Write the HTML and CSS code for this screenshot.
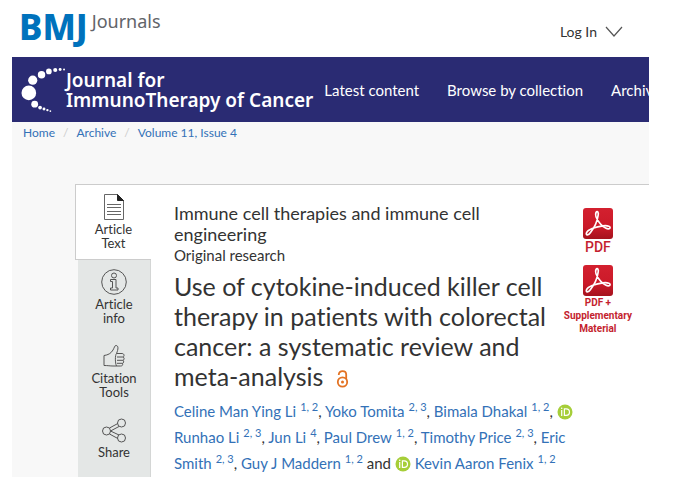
FILE: index.html
```html
<!DOCTYPE html>
<html lang="en">
<head>
    <meta charset="UTF-8">
    <meta name="viewport" content="width=device-width, initial-scale=1.0">
    <title>Journal for ImmunoTherapy of Cancer</title>
    <link rel="stylesheet" href="styles.css">
</head>
<body>
    <!-- Shared icons -->
    <svg class="sprite" aria-hidden="true">
        <defs>
            <linearGradient id="red" x1="0" y1="0" x2="0" y2="1">
                <stop offset="0" stop-color="#d3202f"/>
                <stop offset="0.6" stop-color="#cb1a29"/>
                <stop offset="1" stop-color="#a5121d"/>
            </linearGradient>
        </defs>
        <symbol id="pdf" viewBox="0 0 30 31">
            <rect width="30" height="31" rx="3" fill="url(#red)"/>
            <path d="M13 4.500C14.500 2.500 16 4.500 15 8C14.300 13 11 20 7.500 24.500C5.500 27.500 2.500 27.500 3.500 24.800C5 21.500 13 18.500 20 17.800C25 17.300 28 18.500 26.800 20.300C25 22 20.500 19.500 17.500 16C14.500 12.500 11.500 7.500 13 4.500Z" fill="none" stroke="#fff" stroke-width="1.700" stroke-linejoin="round"/>
        </symbol>
        <symbol id="orcid" viewBox="0 0 16 16">
            <circle cx="8" cy="8" r="7.500" fill="#a6ce39"/>
            <circle cx="4.700" cy="4.200" r="0.800" fill="#fff"/>
            <path d="M4.700 6V12M7.400 4.800V11.400H9.200C11.400 11.400 12.500 9.900 12.500 8.100S11.400 4.800 9.200 4.800Z" fill="none" stroke="#fff" stroke-width="1.200"/>
        </symbol>
    </svg>

    <div class="page">
        <header class="top-bar">
            <a class="bmj" href="#"><strong>BMJ</strong> <span>Journals</span></a>
            <button class="login" type="button">Log In
                <svg width="18" height="11" viewBox="0 0 18 11" aria-hidden="true"><path d="M1 1L9 10L17 1" fill="none" stroke="#555" stroke-width="1.200"/></svg>
            </button>
        </header>

        <nav class="main-nav">
            <a class="brand" href="#">
                <svg width="45" height="48" viewBox="0 0 46 48" fill="#fff" aria-hidden="true">
                    <circle cx="8" cy="27" r="7.500"/>
                    <circle cx="12" cy="14" r="4.700"/>
                    <circle cx="21" cy="8.500" r="3.800"/>
                    <circle cx="28.500" cy="5" r="2.900"/>
                    <circle cx="35" cy="3.500" r="2.100"/>
                    <circle cx="40" cy="3" r="1.500"/>
                    <circle cx="44" cy="3" r="1"/>
                    <circle cx="14" cy="38.500" r="3.500"/>
                    <circle cx="19.500" cy="42" r="1.900"/>
                    <circle cx="23.500" cy="43.500" r="1.500"/>
                    <circle cx="27" cy="44.500" r="1.200"/>
                    <circle cx="30" cy="45.500" r="0.900"/>
                </svg>
                <span>Journal for<br>ImmunoTherapy of Cancer</span>
            </a>
            <a href="#">Latest content</a>
            <a href="#">Browse by collection</a>
            <a href="#">Archive</a>
        </nav>

        <nav class="breadcrumb">
            <a href="#">Home</a><i>/</i><a href="#">Archive</a><i>/</i><a href="#">Volume 11, Issue 4</a>
        </nav>

        <div class="layout">
            <nav class="tabs">
                <a class="active" href="#">
                    <svg width="26" height="28" viewBox="0 0 26 28" fill="none" stroke="#666" aria-hidden="true">
                        <path d="M3.500 1.500H16.500L22.500 7.500V26.500H3.500Z"/>
                        <path d="M16.500 1.500V7.500H22.500Z" fill="#222" stroke="#222"/>
                        <path d="M6 11.500H20M6 14.500H20M6 18.500H20M6 21.500H20"/>
                    </svg>
                    Article<br>Text
                </a>
                <a href="#">
                    <svg width="26" height="28" viewBox="0 0 26 28" fill="none" stroke="#555" aria-hidden="true">
                        <circle cx="13" cy="14" r="12.300"/>
                        <circle cx="13" cy="7.500" r="2.500"/>
                        <path d="M9.500 11.500H15V20H17V22H9.500V20H11.500V13.500H9.500Z"/>
                    </svg>
                    Article<br>info
                </a>
                <a href="#">
                    <svg width="26" height="28" viewBox="0 0 26 28" fill="none" stroke="#555" aria-hidden="true">
                        <path d="M3 13.500C7 13 10 11.500 12 8C13.500 5.500 13.500 3.500 15 3.500C17.500 3.500 17.500 7 15.500 11.500H21C23.500 11.500 23.500 14.500 22 15C23.500 15.500 23.500 18 22 18.300C23 19 23 21 21.500 21.300C22 23 21.500 24 19.500 24H12C9 24 7 23.500 3 23.500Z"/>
                        <path d="M16 15H22M16 18.300H22M16 21.300H21.500M15.500 11.500C14 13 14 21 15.500 24"/>
                    </svg>
                    Citation<br>Tools
                </a>
                <a href="#">
                    <svg width="26" height="28" viewBox="0 0 26 28" fill="none" stroke="#555" aria-hidden="true">
                        <path d="M8.500 12L16.800 7.500M8.500 18L16.800 22.500M9.500 15L18 10.500M9.500 15L18 19"/>
                        <circle cx="5.500" cy="15" r="4"/>
                        <circle cx="20.500" cy="7" r="4"/>
                        <circle cx="20.500" cy="22" r="4"/>
                    </svg>
                    Share
                </a>
            </nav>

            <main class="article">
                <div class="article-head">
                    <div class="headings">
                        <p class="section">Immune cell therapies and immune cell engineering</p>
                        <p class="type">Original research</p>
                        <h1>Use of cytokine-induced killer cell therapy in patients with colorectal cancer: a systematic review and meta-analysis
                            <svg class="open-access" width="13" height="18" viewBox="0 0 13 18" fill="none" stroke="#e37222" stroke-width="1.800" role="img" aria-label="Open access">
                                <circle cx="6.500" cy="12" r="4.700"/>
                                <path d="M2.800 5V4.500C2.800 0 10.200 0 10.200 4.500V9"/>
                                <circle cx="6.500" cy="12" r="1.500" fill="#e37222" stroke="none"/>
                            </svg>
                        </h1>
                    </div>
                    <div class="downloads">
                        <a class="pdf" href="#"><svg width="30" height="31"><use href="#pdf"/></svg>PDF</a>
                        <a href="#"><svg width="30" height="31"><use href="#pdf"/></svg>PDF +<br>Supplementary<br>Material</a>
                    </div>
                </div>

                <p class="authors">
                    <a href="#">Celine Man Ying Li</a><sup>1, 2</sup>, <a href="#">Yoko Tomita</a><sup>2, 3</sup>, <a href="#">Bimala Dhakal</a><sup>1, 2</sup>, <svg width="16" height="16"><use href="#orcid"/></svg>
                    <a href="#">Runhao Li</a><sup>2, 3</sup>, <a href="#">Jun Li</a><sup>4</sup>, <a href="#">Paul Drew</a><sup>1, 2</sup>, <a href="#">Timothy Price</a><sup>2, 3</sup>, <a href="#">Eric Smith</a><sup>2, 3</sup>, <a href="#">Guy J Maddern</a><sup>1, 2</sup> and <svg width="16" height="16"><use href="#orcid"/></svg> <a href="#">Kevin Aaron Fenix</a><sup>1, 2</sup>
                </p>
            </main>
        </div>
    </div>
</body>
</html>
```

FILE: styles.css
```css
* {
    box-sizing: border-box;
}
body {
    font-family: Lato, "Open Sans", sans-serif;
    font-variant-ligatures: none;
    margin: 0;
    background: #fff;
    color: #333;
}
a {
    color: #3371b7;
    text-decoration: none;
}
p, h1 {
    margin: 0;
    font-weight: 400;
}
.sprite {
    position: absolute;
    width: 0;
    height: 0;
}
.page {
    margin: 0 40px 0 12px;
    background: #f8f8f8;
}

/* Header */
.top-bar {
    display: flex;
    justify-content: space-between;
    height: 57px;
    padding: 0 26px 0 7px;
    background: #fff;
}
.bmj {
    display: flex;
    align-items: flex-start;
    gap: 4px;
    font-family: "Noto Sans", sans-serif;
    color: #626469;
}
.bmj strong {
    font-size: 35px;
    font-weight: 800;
    line-height: 54px;
    color: #0072bc;
}
.bmj span {
    font-size: 18px;
    line-height: 42px;
}
.login {
    display: flex;
    align-items: center;
    gap: 8px;
    padding: 5px 0 0;
    border: 0;
    background: none;
    font: inherit;
    font-size: 14px;
    color: #333;
}
.main-nav {
    display: flex;
    align-items: center;
    gap: 28px;
    height: 65px;
    padding-left: 9px;
    background: #2a2b73;
    font-size: 15px;
    white-space: nowrap;
    overflow: hidden;
}
.main-nav a {
    color: #fff;
}
.main-nav .brand {
    display: flex;
    align-items: center;
    margin-right: -17px;
    font-family: "Noto Sans", sans-serif;
    font-size: 19px;
    font-weight: 600;
    line-height: 20px;
}
.breadcrumb {
    padding: 2px 11px 0;
    font-size: 12px;
    line-height: 18px;
}
.breadcrumb i {
    margin: 0 8px;
    font-style: normal;
    color: #ccc;
}

/* Article */
.layout {
    display: flex;
    margin-top: 42px;
    padding-left: 63px;
}
.tabs {
    flex: 0 0 76px;
    border-right: 1px solid #d4d6d5;
    background: linear-gradient(to right, #f8f8f8 3px, #e4e7e6 3px);
}
.tabs a {
    display: flex;
    flex-direction: column;
    align-items: center;
    padding: 8px 0 9px 3px;
    font-size: 13px;
    line-height: 14px;
    text-align: center;
    color: #333;
}
.tabs svg {
    margin-bottom: 1px;
}
.tabs .active {
    margin-right: -1px;
    padding: 8px 0 9px;
    border: 1px solid #ccc;
    border-right: 0;
    background: #fff;
}
.article {
    flex: 1;
    padding: 18px 17px 1px 23px;
    border-top: 1px solid #ccc;
    background: #fff;
}
.article-head {
    display: flex;
    justify-content: space-between;
    gap: 8px;
}
.headings {
    flex: 1;
}
.section {
    font-size: 18px;
    line-height: 21px;
}
.type {
    font-size: 15px;
    line-height: 21px;
}
h1 {
    margin-top: 5px;
    font-size: 25px;
    line-height: 30px;
}
.open-access {
    margin-left: 6px;
    vertical-align: -2px;
}
.downloads {
    display: flex;
    flex-direction: column;
    gap: 9px;
    padding-top: 5px;
}
.downloads a {
    display: flex;
    flex-direction: column;
    align-items: center;
    font-family: Roboto, sans-serif;
    font-size: 10px;
    font-weight: 700;
    line-height: 13px;
    text-align: center;
    color: #c41f2f;
}
.downloads .pdf {
    font-size: 14px;
    font-weight: 500;
    line-height: 17px;
}
.authors {
    padding: 7px 34px 0 0;
    font-size: 15px;
    line-height: 26px;
}
.authors sup {
    margin-left: 4px;
    font-size: 11px;
    line-height: 0;
    white-space: nowrap;
    color: #3371b7;
}
.authors svg {
    vertical-align: -3px;
}
```
